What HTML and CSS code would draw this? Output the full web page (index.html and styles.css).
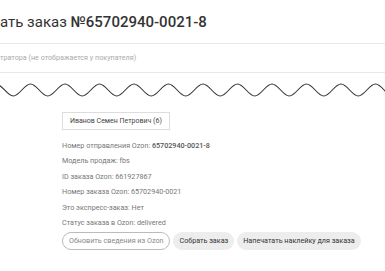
FILE: index.html
```html
<!DOCTYPE html>
<html>
	<head>
		<meta charset="UTF-8">
		<title>Заказ №65702940-0021-8</title>
		<link rel="stylesheet" href="styles.css">
	</head>
	<body>
		<h1 class="title">ать заказ <b>№65702940-0021-8</b></h1>
		<div class="comment">тратора (не отображается у покупателя)</div>
		<svg class="wave" width="385" height="30" viewBox="0 0 385 30">
			<path d="M -4 11 c 6.2 0 11 12 17.25 12 s 11 -12 17.25 -12 s 11 12 17.25 12 s 11 -12 17.25 -12 s 11 12 17.25 12 s 11 -12 17.25 -12 s 11 12 17.25 12 s 11 -12 17.25 -12 s 11 12 17.25 12 s 11 -12 17.25 -12 s 11 12 17.25 12 s 11 -12 17.25 -12 s 11 12 17.25 12 s 11 -12 17.25 -12 s 11 12 17.25 12 s 11 -12 17.25 -12 s 11 12 17.25 12 s 11 -12 17.25 -12 s 11 12 17.25 12 s 11 -12 17.25 -12 s 11 12 17.25 12 s 11 -12 17.25 -12 s 11 12 17.25 12 s 11 -12 17.25 -12" fill="none" stroke="#333" stroke-width="1.1"/>
		</svg>
		<div class="order">
			<span class="client">Иванов Семен Петрович (6)</span>
			<div class="info">
				<div>Номер отправления Ozon: <b>65702940-0021-8</b></div>
				<div>Модель продаж: fbs</div>
				<div>ID заказа Ozon: 661927867</div>
				<div>Номер заказа Ozon: 65702940-0021</div>
				<div>Это экспресс-заказ: Нет</div>
				<div>Статус заказа в Ozon: delivered</div>
			</div>
			<div class="actions">
				<a href="javascript:;" class="btn btn-outline">Обновить сведения из Ozon</a>
				<a href="javascript:;" class="btn">Собрать заказ</a>
				<a href="javascript:;" class="btn">Напечатать наклейку для заказа</a>
			</div>
		</div>
	</body>
</html>
```

FILE: styles.css
```css
* {margin:0; padding:0; box-sizing:border-box;}
body {
	font-family:Roboto, "Noto Sans", sans-serif;
	background:#fff;
	color:#333;
	overflow:hidden;
}
.title {
	margin-top:12px;
	height:20px;
	line-height:20px;
	font-size:15px;
	font-weight:400;
	color:#333;
	white-space:nowrap;
}
.title b {
	font-weight:500;
}
.comment {
	margin-top:11px;
	height:30px;
	line-height:28px;
	border-top:1px solid #e8e8e8;
	border-bottom:1px solid #e8e8e8;
	font-size:7.2px;
	color:#aaa;
}
.wave {
	display:block;
}
.order {
	display:flex;
	flex-direction:column;
	align-items:flex-start;
	padding-left:62px;
	padding-top:9px;
}
.client {
	height:18px;
	line-height:16px;
	padding:0 7px;
	border:1px solid #ddd;
	font-size:7px;
	color:#444;
	white-space:nowrap;
}
.info {
	margin-top:8px;
	font-size:7.2px;
	line-height:15.4px;
	color:#777;
}
.info b {
	font-weight:500;
	color:#555;
}
.actions {
	margin-top:2px;
	display:flex;
	gap:3px;
}
.btn {
	height:18px;
	line-height:18px;
	padding:0 6px;
	border-radius:9px;
	background:#ededed;
	font-size:7.2px;
	color:#333;
	text-decoration:none;
	white-space:nowrap;
}
.btn-outline {
	background:#fff;
	border:1px solid #bbb;
	line-height:16px;
	color:#888;
}
```
